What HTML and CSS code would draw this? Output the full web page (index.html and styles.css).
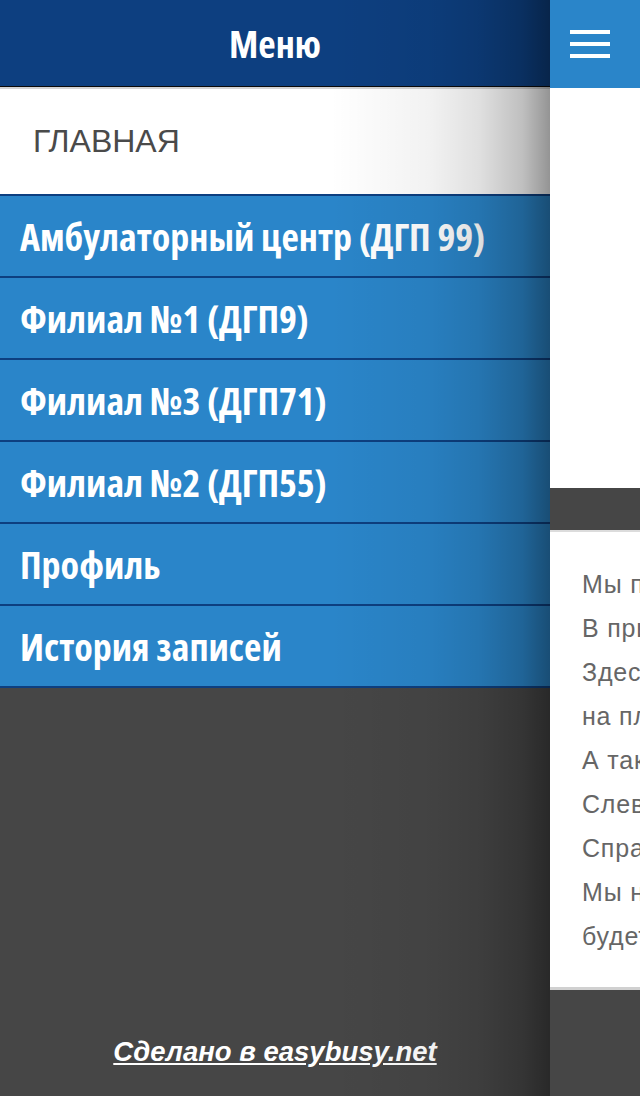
FILE: index.html
```html
<!DOCTYPE html>
<html lang="ru">
<head>
<meta charset="utf-8">
<title>Меню</title>
<link rel="stylesheet" href="styles.css">
</head>
<body>
<div class="app">
  <nav class="drawer">
    <header class="drawer-head">Меню</header>
    <a class="home" href="#">ГЛАВНАЯ</a>
    <ul class="menu">
      <li><a href="#">Амбулаторный центр (ДГП 99)</a></li>
      <li><a href="#">Филиал №1 (ДГП9)</a></li>
      <li><a href="#">Филиал №3 (ДГП71)</a></li>
      <li><a href="#">Филиал №2 (ДГП55)</a></li>
      <li><a href="#">Профиль</a></li>
      <li><a href="#">История записей</a></li>
    </ul>
    <footer class="made"><a href="#">Сделано в easybusy.net</a></footer>
  </nav>
  <main class="page">
    <header class="page-head">
      <svg class="burger" width="40" height="28" viewBox="0 0 40 28" aria-hidden="true">
        <rect x="0" y="0" width="40" height="4" fill="#fff"/>
        <rect x="0" y="12" width="40" height="4" fill="#fff"/>
        <rect x="0" y="24" width="40" height="4" fill="#fff"/>
      </svg>
    </header>
    <section class="hero"></section>
    <div class="band"></div>
    <article class="card">
      <p>Мы постарались сделать запись к врачу удобной.</p>
      <p>В приложении вы можете записаться на приём.</p>
      <p>Здесь же можно посмотреть расписание врачей</p>
      <p>на платные и бесплатные услуги.</p>
      <p>А также историю ваших записей.</p>
      <p>Слева — меню с филиалами.</p>
      <p>Справа — ваш профиль.</p>
      <p>Мы надеемся, что приложение</p>
      <p>будет вам полезно.</p>
    </article>
    <div class="page-rest"></div>
  </main>
</div>
</body>
</html>
```

FILE: styles.css
```css
html, body {
  margin: 0;
  padding: 0;
  height: 100%;
  overflow: hidden;
  background: #464646;
}

.app {
  display: flex;
  width: 640px;
  height: 1096px;
}

/* ---------- drawer ---------- */
.drawer {
  position: relative;
  flex: 0 0 550px;
  width: 550px;
  min-width: 0;
  overflow: hidden;
  display: flex;
  flex-direction: column;
  background: #464646;
  font-family: "Open Sans", "DejaVu Sans Condensed", sans-serif;
  font-stretch: 75%;
}

.drawer::after {
  content: "";
  position: absolute;
  inset: 0;
  pointer-events: none;
  background: linear-gradient(to right,
    rgba(0,0,0,0) 0%,
    rgba(0,0,0,0) 60%,
    rgba(0,0,0,0.05) 78%,
    rgba(0,0,0,0.12) 87%,
    rgba(0,0,0,0.25) 95%,
    rgba(0,0,0,0.42) 100%);
}

.drawer-head {
  height: 86px;
  border-bottom: 1px solid #0a0a0a;
  background: #0d3f80;
  color: #fff;
  font-weight: 700;
  font-size: 38px;
  display: flex;
  align-items: center;
  justify-content: center;
}

.home {
  display: flex;
  align-items: center;
  height: 105px;
  padding-left: 33px;
  border-top: 2px solid #d4d4d4;
  border-bottom: 2px solid #0d3f80;
  background: #fff;
  color: #4a4a4a;
  font-family: "Liberation Sans", Arial, sans-serif;
  font-stretch: normal;
  font-size: 32px;
  text-decoration: none;
}

.menu {
  list-style: none;
  margin: 0;
  padding: 0;
}

.menu li {
  border-bottom: 2px solid #0d3f80;
  background: #2a85c9;
}

.menu a {
  display: flex;
  align-items: center;
  height: 80px;
  padding-left: 20px;
  color: #fff;
  font-weight: 700;
  font-size: 38px;
  text-decoration: none;
  white-space: nowrap;
}

.made {
  margin-top: auto;
  padding-bottom: 26px;
  text-align: center;
  line-height: 30px;
}

.made a {
  color: #fff;
  font-family: "Liberation Sans", Arial, sans-serif;
  font-stretch: normal;
  font-weight: bold;
  font-style: italic;
  font-size: 27.5px;
  text-decoration: underline;
}

/* ---------- page behind ---------- */
.page {
  flex: 0 0 90px;
  min-width: 0;
  overflow: hidden;
  display: flex;
  flex-direction: column;
  background: #464646;
}

.page-head {
  height: 88px;
  background: #2a85c9;
  padding: 30px 0 0 20px;
  box-sizing: border-box;
}

.burger {
  display: block;
}

.hero {
  height: 400px;
  background: #fff;
}

.band {
  height: 42px;
  background: #464646;
}

.card {
  border-top: 2px solid #dcdcdc;
  border-bottom: 3px solid #d0d0d0;
  background: #fff;
  padding: 30px 0 29px 32px;
  font-family: "Liberation Sans", Arial, sans-serif;
  font-size: 25px;
  letter-spacing: 0.8px;
  line-height: 44px;
  color: #666;
}

.card p {
  margin: 0;
  white-space: nowrap;
}

.page-rest {
  flex: 1;
  background: #464646;
}
```
